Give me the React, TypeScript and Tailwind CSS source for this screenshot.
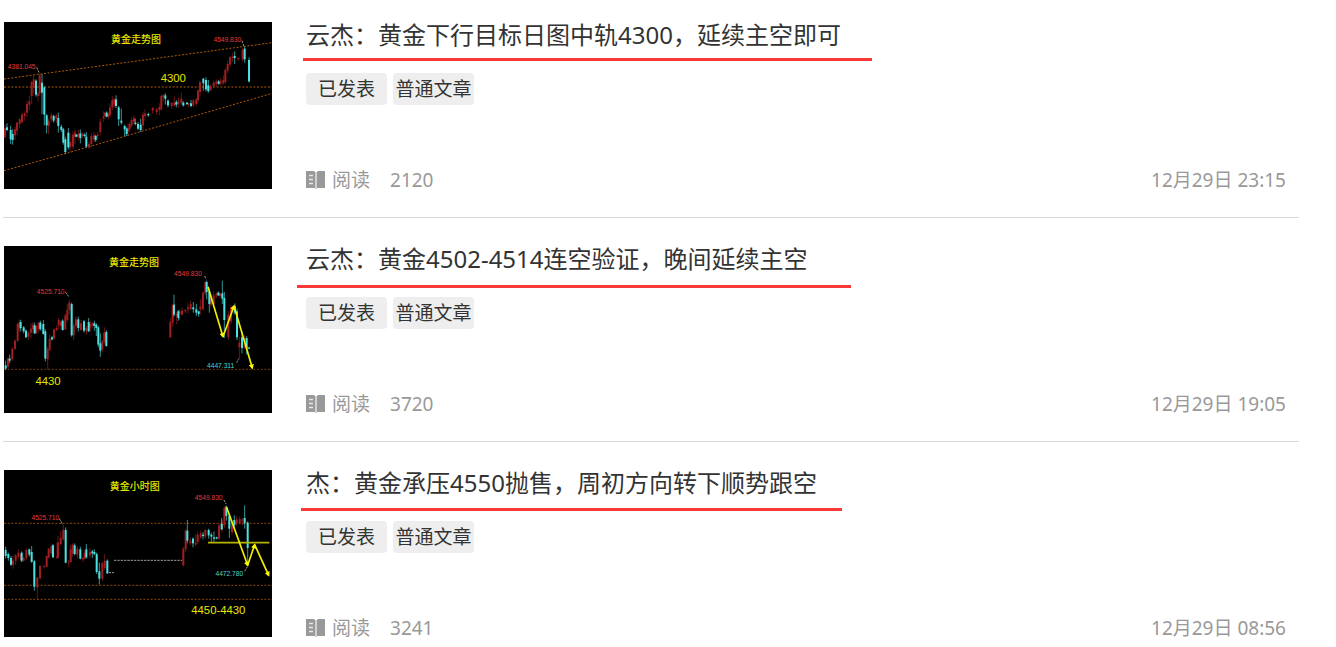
import React from 'react';

// [x, high, bodyTop, bodyBottom, low]
type Candle = [number, number, number, number, number];

interface Label {
  x: number;
  y: number;
  text: string;
  kind: 'title' | 'note' | 'high' | 'low';
}

interface ChartData {
  up: Candle[];
  down: Candle[];
  levels: string[];
  levelColor: string;
  leaders: string[];
  arrows: string[];
  support?: string;
  labels: Label[];
}

interface Article {
  id: number;
  title: string;
  reads: number;
  date: string;
  mark: string;
  chart: ChartData;
}

const dailyChart: ChartData = {
  up: [
    [3, 308, 318, 345, 350], [33, 315, 322, 340, 354], [39, 300, 302, 326, 340], [47, 288, 292, 306, 318],
    [54, 272, 278, 300, 304], [62, 268, 274, 282, 296], [69, 236, 246, 272, 285], [76, 222, 238, 248, 264],
    [83, 176, 180, 222, 246], [89, 158, 172, 198, 214], [102, 210, 214, 222, 238], [107, 154, 160, 214, 222],
    [134, 290, 296, 312, 336], [142, 272, 280, 292, 300], [157, 276, 280, 290, 304], [198, 332, 360, 376, 392],
    [207, 328, 338, 374, 380], [213, 322, 332, 344, 366], [223, 324, 336, 344, 356], [236, 330, 336, 342, 350],
    [255, 358, 366, 376, 380], [262, 334, 342, 366, 376], [270, 330, 340, 352, 360], [281, 330, 338, 342, 352],
    [289, 290, 300, 330, 340], [298, 268, 284, 288, 300], [303, 270, 272, 282, 292], [313, 270, 276, 284, 292],
    [318, 244, 256, 280, 286], [325, 222, 234, 256, 264], [331, 228, 232, 248, 256], [372, 306, 318, 328, 340],
    [377, 300, 306, 320, 330], [383, 286, 294, 310, 316], [390, 280, 288, 300, 306], [417, 270, 278, 310, 328],
    [423, 262, 274, 282, 296], [446, 254, 258, 266, 276], [458, 258, 262, 270, 278], [466, 244, 256, 264, 280],
    [472, 218, 222, 262, 266], [478, 216, 220, 226, 238], [503, 240, 242, 252, 260], [511, 224, 242, 250, 254],
    [523, 226, 238, 246, 258], [532, 212, 230, 244, 250], [554, 242, 244, 248, 256], [568, 230, 236, 250, 256],
    [577, 228, 232, 246, 252], [582, 202, 206, 234, 242], [588, 176, 180, 210, 224], [620, 186, 192, 204, 208],
    [629, 176, 182, 192, 196], [637, 172, 178, 186, 194], [650, 168, 178, 184, 190], [658, 160, 174, 184, 188],
    [664, 138, 144, 180, 186], [671, 116, 126, 146, 154], [678, 102, 106, 128, 134], [686, 92, 104, 108, 120],
    [703, 106, 108, 112, 116], [716, 78, 84, 112, 118],
  ],
  down: [
    [9, 304, 316, 324, 328], [20, 312, 324, 352, 366], [26, 322, 336, 354, 368], [96, 172, 176, 218, 224],
    [114, 156, 182, 212, 276], [121, 192, 196, 278, 310], [128, 276, 280, 310, 334], [149, 278, 282, 296, 302],
    [163, 272, 288, 312, 332], [172, 308, 314, 324, 330], [178, 318, 322, 362, 368], [184, 344, 352, 390, 396],
    [193, 318, 332, 376, 382], [217, 336, 338, 344, 346], [229, 322, 334, 348, 364], [242, 334, 338, 342, 346],
    [247, 330, 344, 374, 376], [275, 338, 342, 354, 360], [308, 268, 272, 284, 286], [336, 220, 232, 252, 258],
    [344, 252, 256, 292, 312], [352, 260, 296, 302, 308], [362, 308, 312, 322, 342], [368, 316, 320, 336, 342],
    [394, 290, 302, 306, 310], [402, 300, 306, 320, 324], [410, 290, 308, 324, 330], [433, 272, 276, 280, 284],
    [484, 214, 220, 230, 248], [492, 232, 236, 250, 256], [517, 234, 240, 248, 256], [538, 238, 242, 250, 254],
    [549, 240, 242, 246, 250], [561, 234, 244, 252, 256], [598, 168, 170, 184, 206], [606, 166, 174, 202, 208],
    [613, 174, 190, 208, 212], [644, 174, 178, 186, 188], [692, 88, 102, 108, 126], [722, 74, 80, 112, 122],
    [735, 106, 114, 178, 182],
  ],
  levels: ['M0 171 L804 62', 'M0 195 H804', 'M0 446 L180 396 L420 326 L804 214'],
  levelColor: '#b05a08',
  leaders: ['M98 136 L106 154', 'M714 56 L720 74'],
  arrows: [],
  labels: [
    { x: 396, y: 51, text: '黄金走势图', kind: 'title' },
    { x: 508, y: 168, text: '4300', kind: 'note' },
    { x: 53, y: 134, text: '4381.045', kind: 'high' },
    { x: 670, y: 52, text: '4549.830', kind: 'high' },
  ],
};

const trendChart: ChartData = {
  up: [
    [12, 334, 338, 362, 368], [25, 304, 308, 340, 344], [33, 280, 284, 308, 312], [41, 230, 234, 284, 288],
    [46, 220, 230, 248, 258], [73, 256, 260, 272, 282], [81, 232, 248, 260, 276], [87, 228, 236, 250, 262],
    [97, 236, 240, 262, 264], [104, 228, 230, 248, 258], [131, 302, 310, 340, 370], [137, 266, 278, 312, 316],
    [150, 248, 250, 278, 280], [158, 238, 246, 252, 256], [164, 216, 222, 238, 250], [171, 222, 228, 240, 250],
    [184, 202, 208, 250, 252], [190, 174, 192, 222, 228], [196, 162, 170, 192, 206], [209, 230, 238, 268, 282],
    [216, 212, 220, 240, 250], [231, 222, 232, 252, 254], [247, 240, 246, 256, 266], [259, 224, 234, 244, 256],
    [265, 228, 232, 238, 246], [295, 282, 286, 310, 318], [301, 244, 260, 288, 296], [499, 216, 228, 274, 276],
    [506, 174, 178, 230, 242], [518, 198, 204, 210, 234], [527, 190, 196, 202, 222], [534, 184, 194, 206, 208],
    [544, 188, 192, 196, 202], [552, 172, 184, 190, 202], [560, 164, 174, 190, 192], [589, 160, 182, 190, 206],
    [597, 136, 140, 190, 194], [604, 104, 108, 142, 148], [621, 144, 150, 176, 184], [629, 136, 148, 174, 184],
    [637, 138, 144, 148, 156], [648, 140, 142, 150, 156], [673, 196, 206, 274, 282], [681, 178, 184, 226, 234],
    [688, 178, 182, 192, 206], [706, 272, 290, 304, 340], [722, 268, 276, 304, 310],
  ],
  down: [
    [5, 344, 358, 368, 372], [17, 326, 338, 344, 352], [50, 222, 228, 246, 256], [59, 240, 244, 256, 262],
    [66, 250, 254, 274, 276], [92, 230, 238, 262, 264], [109, 224, 230, 250, 254], [118, 222, 234, 264, 266],
    [124, 250, 256, 338, 346], [144, 270, 274, 280, 284], [176, 220, 224, 252, 254], [203, 170, 174, 268, 272],
    [223, 212, 220, 246, 256], [240, 222, 226, 254, 260], [254, 216, 228, 256, 258], [271, 224, 232, 240, 254],
    [277, 232, 236, 246, 270], [283, 240, 244, 296, 304], [289, 262, 292, 314, 332], [307, 252, 258, 300, 302],
    [510, 146, 176, 206, 212], [523, 192, 196, 216, 224], [568, 168, 184, 190, 200], [577, 174, 190, 200, 210],
    [584, 194, 196, 204, 212], [608, 104, 108, 138, 160], [616, 130, 136, 174, 200], [643, 136, 140, 148, 150],
    [655, 104, 142, 158, 174], [661, 138, 156, 222, 276], [693, 172, 180, 200, 206], [699, 188, 196, 274, 282],
    [714, 256, 274, 306, 322], [728, 270, 276, 308, 326], [735, 302, 305, 308, 310],
  ],
  levels: ['M0 370 H804'],
  levelColor: '#7a3a04',
  leaders: ['M184 138 L196 154', 'M602 90 L606 100', 'M698 350 L704 338'],
  arrows: ['M612 122 L657 272', 'M657 272 L690 180', 'M690 180 L745 366'],
  labels: [
    { x: 390, y: 50, text: '黄金走势图', kind: 'title' },
    { x: 132, y: 405, text: '4430', kind: 'note' },
    { x: 140, y: 137, text: '4525.710', kind: 'high' },
    { x: 552, y: 82, text: '4549.830', kind: 'high' },
    { x: 650, y: 358, text: '4447.311', kind: 'low' },
  ],
};

const hourChart: ChartData = {
  up: [
    [27, 258, 272, 284, 296], [35, 252, 256, 272, 284], [43, 238, 248, 260, 268], [51, 250, 252, 270, 276],
    [59, 260, 264, 272, 276], [67, 236, 240, 264, 270], [100, 322, 322, 352, 388], [108, 286, 288, 324, 328],
    [120, 284, 288, 290, 296], [128, 256, 258, 290, 292], [134, 234, 236, 262, 266], [142, 224, 228, 250, 256],
    [159, 216, 260, 264, 266], [162, 198, 218, 262, 266], [170, 184, 204, 222, 226], [178, 164, 180, 208, 212],
    [194, 270, 278, 280, 292], [200, 224, 238, 276, 278], [206, 220, 224, 252, 260], [220, 228, 236, 254, 266],
    [237, 260, 264, 268, 276], [242, 240, 248, 266, 268], [258, 234, 246, 256, 264], [295, 276, 280, 326, 332],
    [302, 252, 272, 294, 300], [538, 230, 236, 286, 290], [545, 176, 182, 238, 246], [559, 202, 212, 220, 226],
    [575, 192, 218, 224, 228], [581, 184, 194, 216, 222], [590, 182, 190, 202, 206], [604, 178, 180, 200, 206],
    [645, 160, 166, 206, 210], [654, 150, 158, 178, 188], [661, 108, 114, 166, 174], [684, 152, 158, 186, 194],
    [698, 138, 148, 160, 168], [707, 140, 148, 160, 164], [715, 146, 148, 152, 166],
  ],
  down: [
    [5, 230, 240, 258, 266], [13, 248, 252, 264, 272], [21, 258, 264, 284, 288], [53, 244, 248, 272, 276],
    [76, 236, 238, 254, 260], [83, 228, 246, 276, 278], [91, 270, 274, 350, 362], [147, 222, 226, 262, 264],
    [185, 172, 180, 278, 280], [212, 220, 226, 252, 256], [229, 230, 238, 266, 268], [247, 222, 238, 262, 266],
    [265, 240, 244, 250, 264], [271, 238, 246, 252, 256], [278, 248, 252, 306, 312], [286, 278, 304, 326, 344],
    [310, 268, 272, 310, 312], [550, 150, 182, 212, 220], [567, 202, 206, 220, 232], [597, 186, 194, 198, 208],
    [614, 176, 180, 196, 206], [622, 188, 194, 200, 216], [630, 184, 202, 206, 216], [638, 200, 202, 206, 208],
    [653, 144, 162, 178, 180], [667, 106, 110, 138, 152], [676, 132, 138, 176, 204], [691, 136, 150, 166, 178],
    [722, 106, 144, 160, 176], [731, 154, 158, 234, 288],
  ],
  levels: ['M0 160 H804', 'M0 346 H804', 'M0 388 H804'],
  levelColor: '#8f4705',
  leaders: ['M166 146 L176 164', 'M660 90 L666 102', 'M722 304 L730 290', 'M314 308 H330', 'M330 271 H534'],
  arrows: ['M668 112 L731 286', 'M731 286 L752 224', 'M752 224 L794 316'],
  support: 'M612 218 H796',
  labels: [
    { x: 392, y: 50, text: '黄金小时图', kind: 'title' },
    { x: 643, y: 421, text: '4450-4430', kind: 'note' },
    { x: 124, y: 142, text: '4525.710', kind: 'high' },
    { x: 614, y: 84, text: '4549.830', kind: 'high' },
    { x: 676, y: 311, text: '4472.780', kind: 'low' },
  ],
};

const articles: Article[] = [
  {
    id: 1,
    title: '云杰：黄金下行目标日图中轨4300，延续主空即可',
    reads: 2120,
    date: '12月29日 23:15',
    mark: 'top-9 -left-[3px] w-[569px]',
    chart: dailyChart,
  },
  {
    id: 2,
    title: '云杰：黄金4502-4514连空验证，晚间延续主空',
    reads: 3720,
    date: '12月29日 19:05',
    mark: 'top-[39px] -left-[9px] w-[554px]',
    chart: trendChart,
  },
  {
    id: 3,
    title: '杰：黄金承压4550抛售，周初方向转下顺势跟空',
    reads: 3241,
    date: '12月29日 08:56',
    mark: 'top-[38px] -left-[5px] w-[541px]',
    chart: hourChart,
  },
];

const labelStyles = {
  title: 'fill-[#e6e600] text-[30px] font-medium',
  note: 'fill-[#e6e600] text-[34px]',
  high: 'fill-[#e23a3f] text-[20px]',
  low: 'fill-[#4ad4d4] text-[20px]',
};

const Candles = ({ data, color }: { data: Candle[]; color: string }) => (
  <g stroke={color} fill={color}>
    {data.map(([x, high, top, bottom, low]) => (
      <g key={`${x}-${high}`}>
        <path d={`M${x} ${high} V${low}`} strokeWidth={2} />
        <rect x={x - 3} y={top} width={6} height={bottom - top} stroke="none" />
      </g>
    ))}
  </g>
);

const Chart = ({ data, id }: { data: ChartData; id: number }) => (
  <svg viewBox="0 0 804 501" className="h-[167px] w-[268px] shrink-0 bg-black" fill="none">
    <defs>
      <marker id={`head-${id}`} viewBox="0 0 10 10" refX="7" refY="5" markerWidth="20" markerHeight="15" markerUnits="userSpaceOnUse" orient="auto">
        <path d="M0 0 L10 5 L0 10 Z" fill="#ff0" />
      </marker>
    </defs>
    {data.levels.map((d) => (
      <path key={d} d={d} stroke={data.levelColor} strokeWidth={3} strokeDasharray="6 5" />
    ))}
    <Candles data={data.up} color="#a01e22" />
    <Candles data={data.down} color="#4ce0e0" />
    {data.leaders.map((d) => (
      <path key={d} d={d} stroke="#999" strokeWidth={3} strokeDasharray="7 3" />
    ))}
    {data.support && <path d={data.support} stroke="#b5b500" strokeWidth={5} />}
    {data.arrows.map((d) => (
      <path key={d} d={d} stroke="#f0f000" strokeWidth={5} markerEnd={`url(#head-${id})`} />
    ))}
    {data.labels.map((label) => (
      <text
        key={label.text}
        x={label.x}
        y={label.y}
        dy="0.36em"
        textAnchor="middle"
        className={`font-['Liberation_Sans','Noto_Sans_CJK_SC',sans-serif] ${labelStyles[label.kind]}`}
      >
        {label.text}
      </text>
    ))}
  </svg>
);

const BookIcon = () => (
  <svg viewBox="0 0 20 18" className="h-[18px] w-5" aria-hidden="true">
    <path d="M0 0 H8 L9 1 V17 H0 Z" fill="#999" />
    <path d="M11 1 L12 0 H19 V17 H11 Z" fill="#999" />
    <path d="M9 1 H11 V18 H9 Z" fill="#d0d0d0" />
    <path d="M3 4.500 H7 M3 8.500 H7 M3 12.500 H7" stroke="#e8e8e8" strokeWidth="1.4" />
  </svg>
);

const Tag = ({ children }: { children: React.ReactNode }) => (
  <span className="flex h-8 min-w-[81px] items-center justify-center rounded bg-[#eee] text-[19px] text-[#333]">
    {children}
  </span>
);

const ArticleRow = ({ article }: { article: Article }) => (
  <li className="flex gap-[34px] border-b border-[#d9d9d9] py-7 pr-[13px] pl-px first:pt-[22px] last:border-b-0 last:pb-2">
    <Chart data={article.chart} id={article.id} />
    <div className="flex min-w-0 flex-1 flex-col">
      <div className="relative">
        <h2 className="text-2xl leading-[26px] whitespace-nowrap text-[#333]">{article.title}</h2>
        <span className={`absolute h-[3px] bg-[#f93838] ${article.mark}`} />
      </div>
      <div className="mt-[25px] flex gap-1.5">
        <Tag>已发表</Tag>
        <Tag>普通文章</Tag>
      </div>
      <div className="mt-auto flex items-center justify-between text-[19px] leading-4 text-[#999]">
        <div className="flex items-center">
          <BookIcon />
          <span className="ml-1.5">阅读</span>
          <span className="ml-5">{article.reads}</span>
        </div>
        <time>{article.date}</time>
      </div>
    </div>
  </li>
);

export default function App() {
  return (
    <main className="bg-white pr-[37px] pl-[3px] font-['Noto_Sans','Noto_Sans_CJK_SC',sans-serif]">
      <ul>
        {articles.map((article) => (
          <ArticleRow key={article.id} article={article} />
        ))}
      </ul>
    </main>
  );
}
